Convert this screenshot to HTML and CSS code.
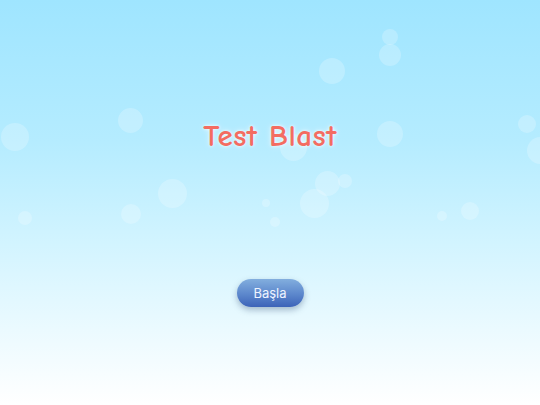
FILE: index.html
```html
<!DOCTYPE html>
<html lang="tr">
<head>
<meta charset="utf-8">
<title>Test Blast</title>
<link rel="stylesheet" href="styles.css">
</head>
<body>
<div class="screen">
  <div class="bubbles">
    <span class="bubble" style="left:382px;top:29px;width:16px;height:16px"></span>
    <span class="bubble" style="left:379px;top:44px;width:22px;height:22px"></span>
    <span class="bubble" style="left:319px;top:58px;width:26px;height:26px"></span>
    <span class="bubble" style="left:118px;top:108px;width:25px;height:25px"></span>
    <span class="bubble" style="left:1px;top:123px;width:28px;height:28px"></span>
    <span class="bubble" style="left:377px;top:121px;width:26px;height:26px"></span>
    <span class="bubble" style="left:280px;top:134px;width:27px;height:27px"></span>
    <span class="bubble" style="left:518px;top:115px;width:18px;height:18px"></span>
    <span class="bubble" style="left:527px;top:137px;width:27px;height:27px"></span>
    <span class="bubble" style="left:315px;top:171px;width:25px;height:25px"></span>
    <span class="bubble" style="left:338px;top:174px;width:14px;height:14px"></span>
    <span class="bubble" style="left:158px;top:179px;width:29px;height:29px"></span>
    <span class="bubble" style="left:300px;top:189px;width:29px;height:29px"></span>
    <span class="bubble" style="left:121px;top:204px;width:20px;height:20px"></span>
    <span class="bubble" style="left:18px;top:211px;width:14px;height:14px"></span>
    <span class="bubble" style="left:262px;top:199px;width:8px;height:8px"></span>
    <span class="bubble" style="left:270px;top:217px;width:10px;height:10px"></span>
    <span class="bubble" style="left:437px;top:211px;width:10px;height:10px"></span>
    <span class="bubble" style="left:461px;top:202px;width:18px;height:18px"></span>
  </div>
  <h1 class="title">Test Blast</h1>
  <button class="start">Başla</button>
</div>
</body>
</html>
```
FILE: styles.css
```css
html, body {
  margin: 0;
  padding: 0;
}
body {
  width: 540px;
  height: 405px;
  overflow: hidden;
}
.screen {
  position: relative;
  width: 540px;
  height: 405px;
  display: flex;
  flex-direction: column;
  align-items: center;
  background: linear-gradient(to bottom, #9fe5ff 0%, #b5ecff 35%, #d2f4ff 60%, #effbff 85%, #ffffff 100%);
  overflow: hidden;
}
.bubbles {
  position: absolute;
  inset: 0;
}
.bubble {
  position: absolute;
  border-radius: 50%;
  background: rgba(255, 255, 255, 0.22);
}
.title {
  position: relative;
  margin: 118px 0 0 0;
  font-family: "Comic Sans MS", "Comic Neue", "DejaVu Sans", sans-serif;
  font-weight: bold;
  font-size: 31px;
  line-height: 36px;
  color: #f36c62;
  text-shadow: 0 0 3px rgba(255,255,255,0.9), 0 0 6px rgba(255,255,255,0.6);
  letter-spacing: 0.5px;
}
.start {
  position: relative;
  margin-top: 125px;
  width: 67px;
  height: 28px;
  border: none;
  border-radius: 14px;
  background: linear-gradient(to bottom, #82aede 0%, #5c87cc 55%, #3c63b8 100%);
  box-shadow: 0 3px 6px rgba(40, 70, 110, 0.35);
  color: #eef4ff;
  font-family: "Inter", "Liberation Sans", sans-serif;
  font-size: 13px;
  padding: 0;
}
```
